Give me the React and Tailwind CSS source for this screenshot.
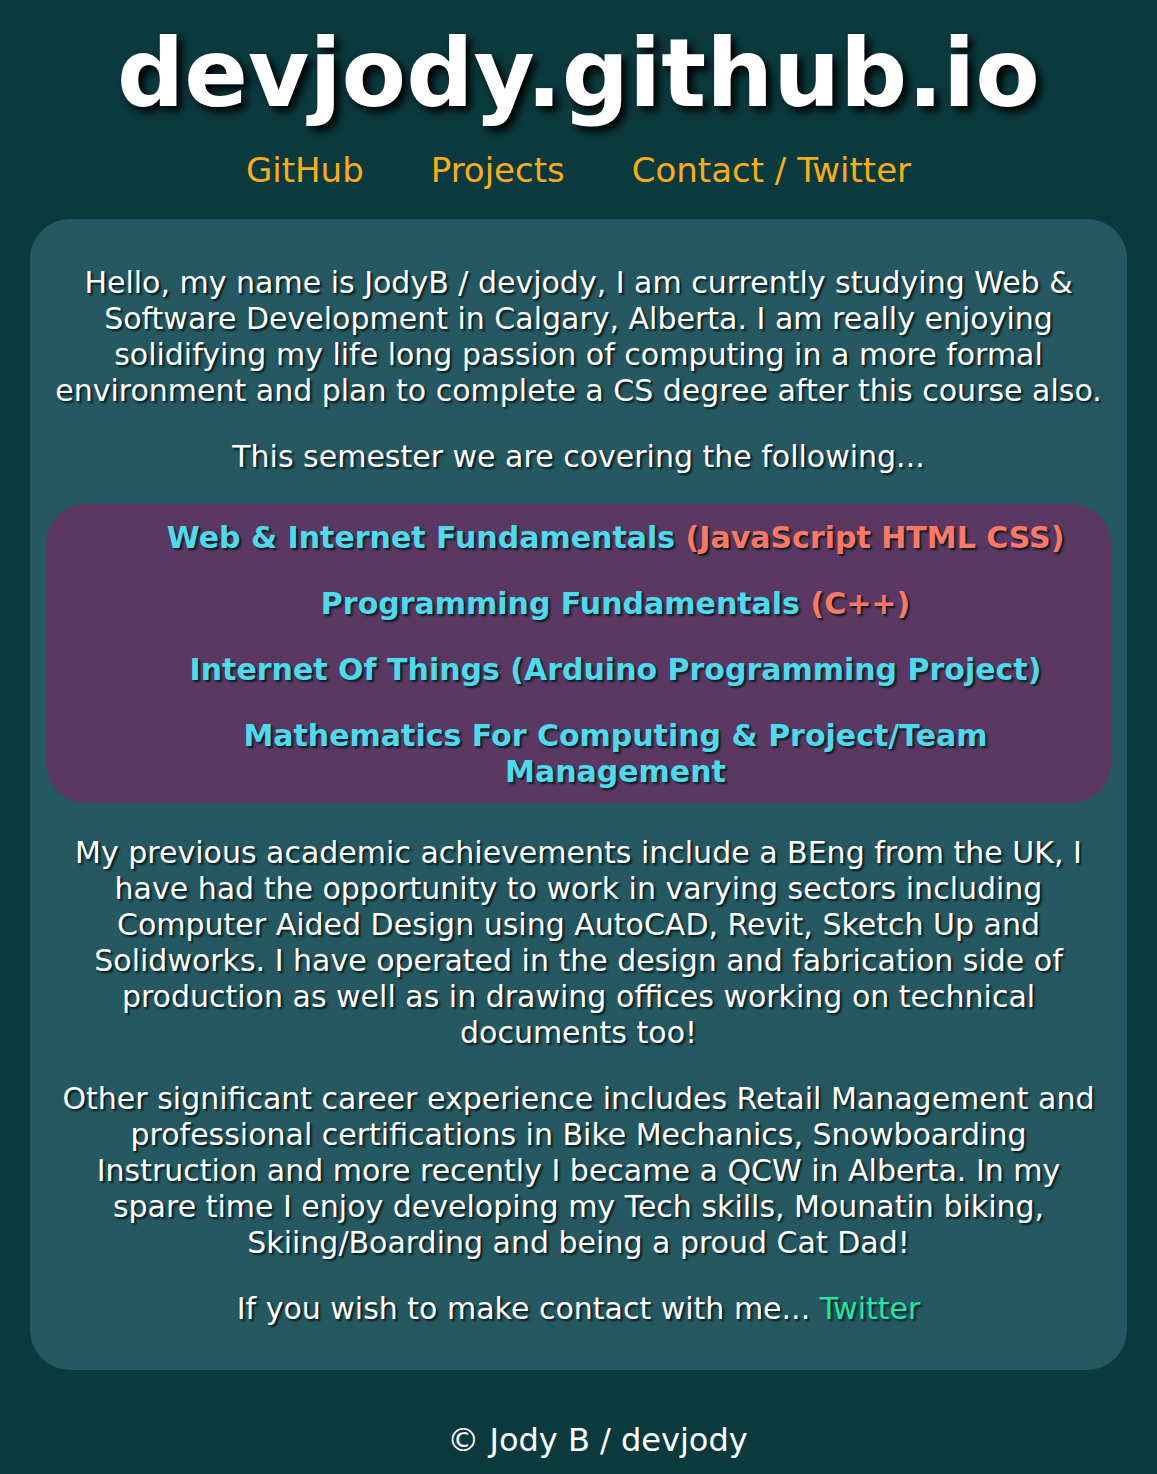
import React from 'react';

const courses = [
  { name: 'Web & Internet Fundamentals', lang: '(JavaScript HTML CSS)' },
  { name: 'Programming Fundamentals', lang: '(C++)' },
  { name: 'Internet Of Things (Arduino Programming Project)' },
  { name: 'Mathematics For Computing & Project/Team Management' },
];

const App = () => {
  return (
    <div
      className="min-h-[1474px] bg-[#0b3a3e] text-white text-center"
      style={{ fontFamily: '"DejaVu Sans", Verdana, sans-serif' }}
    >
      <header className="pt-5">
        <h1 className="text-[94px] font-bold leading-[108px] [text-shadow:5px_5px_8px_#000]">
          devjody.github.io
        </h1>
        <nav className="flex justify-center gap-[67px] mt-[22px] text-[34px] leading-[40px] text-[#f9ad1c]">
          <a href="#">GitHub</a>
          <a href="#">Projects</a>
          <a href="#">Contact / Twitter</a>
        </nav>
      </header>

      <main className="mx-[30px] mt-[29px] bg-[#255860] rounded-[40px] px-5 pt-[46px] pb-[43px] text-[30px] leading-[36px] [text-shadow:2px_2px_2px_#061c1f]">
        <p>
          Hello, my name is JodyB / devjody, I am currently studying Web &amp; Software Development in Calgary,
          Alberta. I am really enjoying solidifying my life long passion of computing in a more formal environment
          and plan to complete a CS degree after this course also.
        </p>
        <p className="mt-[30px]">This semester we are covering the following...</p>

        <ul className="mt-[29px] -mx-[4px] bg-[#5a3862] rounded-[40px] pl-[90px] pr-[16px] pt-4 pb-[13px] font-bold text-[#4fd9ec]">
          {courses.map((c, i) => (
            <li key={i} className={i > 0 ? 'mt-[30px]' : ''}>
              {c.name}
              {c.lang && <span className="text-[#fb7867]"> {c.lang}</span>}
            </li>
          ))}
        </ul>

        <p className="mt-[32px]">
          My previous academic achievements include a BEng from the UK, I have had the opportunity to work in
          varying sectors including Computer Aided Design using AutoCAD, Revit, Sketch Up and Solidworks. I have
          operated in the design and fabrication side of production as well as in drawing offices working on
          technical documents too!
        </p>
        <p className="mt-[30px]">
          Other significant career experience includes Retail Management and professional certifications in Bike
          Mechanics, Snowboarding Instruction and more recently I became a QCW in Alberta. In my
          <br />
          spare time I enjoy developing my Tech skills, Mounatin biking, Skiing/Boarding and being a proud Cat Dad!
        </p>
        <p className="mt-[30px]">
          If you wish to make contact with me... <a href="#" className="text-[#1de9a8]">Twitter</a>
        </p>
      </main>

      <footer className="pt-[52px] pb-4 pl-[38px] text-[32px] leading-[36px]">© Jody B / devjody</footer>
    </div>
  );
};

export default App;
